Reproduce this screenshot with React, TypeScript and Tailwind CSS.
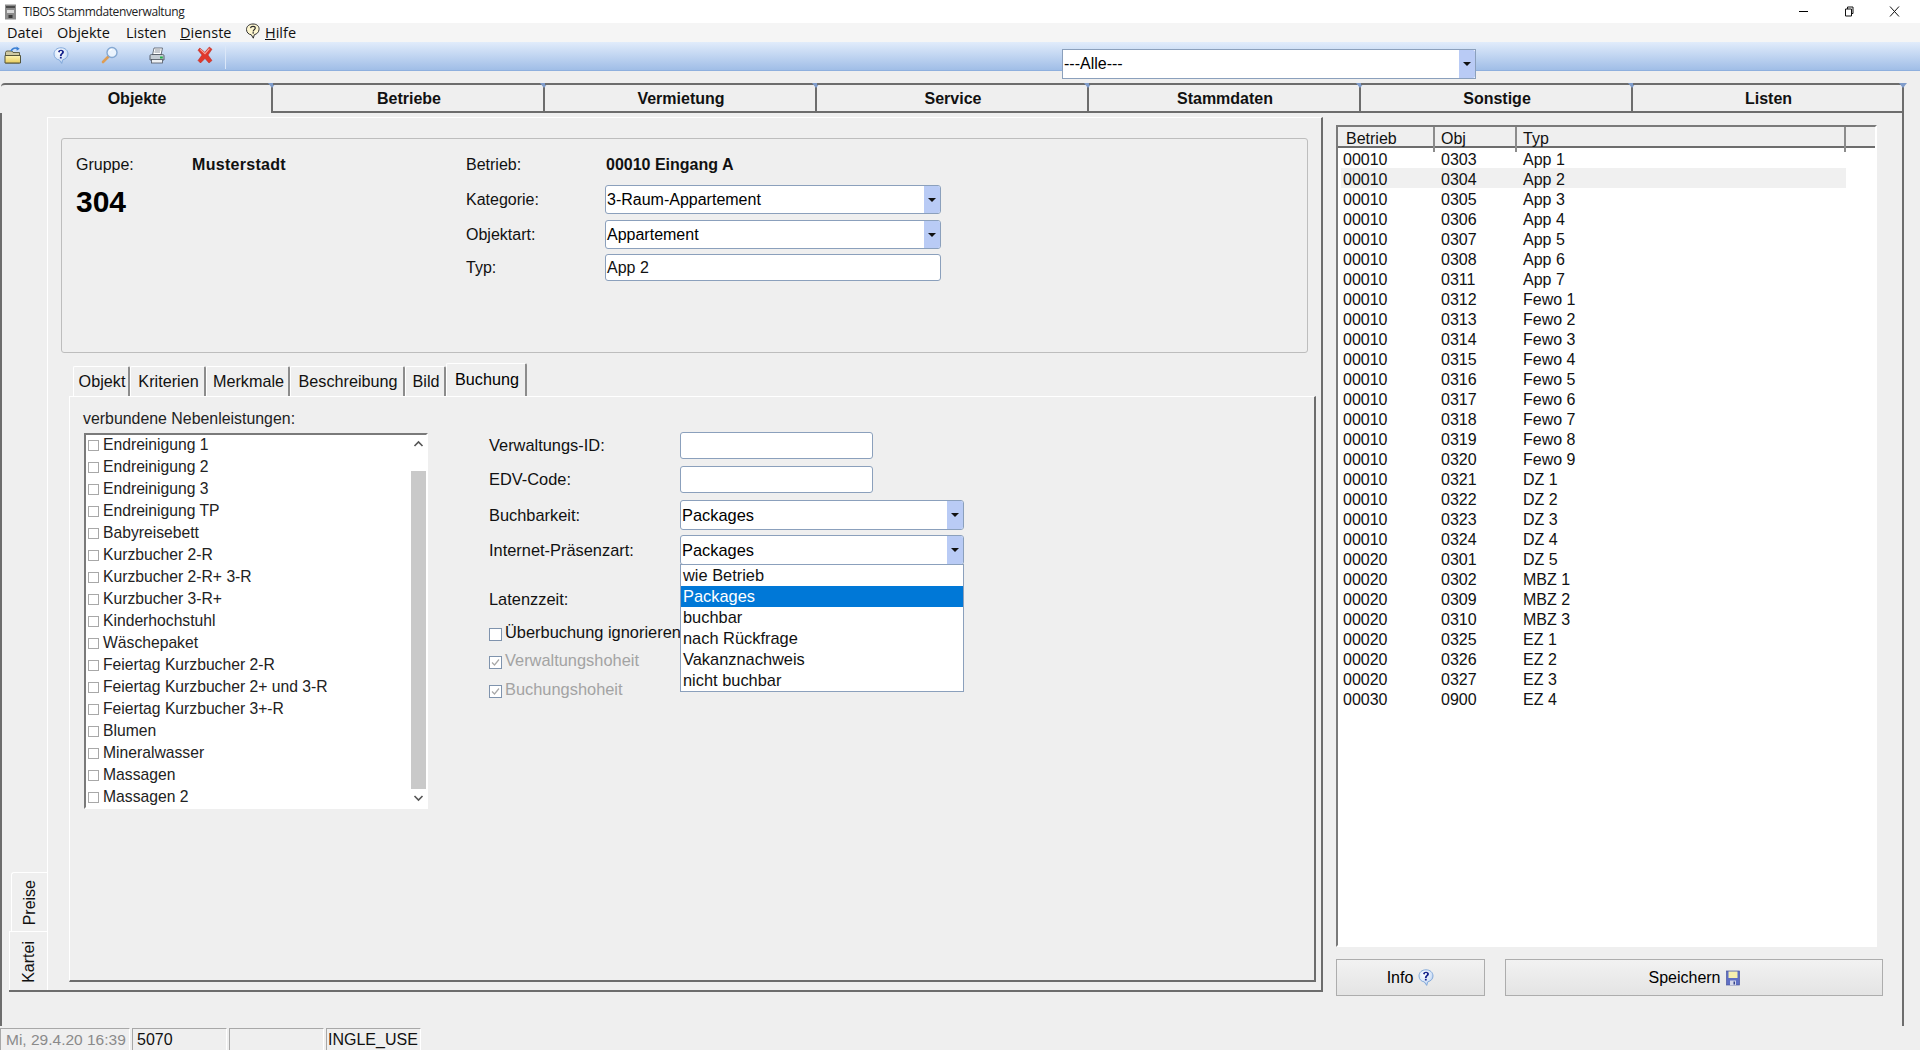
import type { ReactNode } from "react";

const mainTabs = ["Objekte", "Betriebe", "Vermietung", "Service", "Stammdaten", "Sonstige", "Listen"];
const subTabs = [
  { label: "Objekt", w: "w-[57px]" },
  { label: "Kriterien", w: "w-[76px]" },
  { label: "Merkmale", w: "w-[84px]" },
  { label: "Beschreibung", w: "w-[115px]" },
  { label: "Bild", w: "w-[41px]" },
];
const extras = [
  "Endreinigung 1",
  "Endreinigung 2",
  "Endreinigung 3",
  "Endreinigung TP",
  "Babyreisebett",
  "Kurzbucher 2-R",
  "Kurzbucher 2-R+ 3-R",
  "Kurzbucher 3-R+",
  "Kinderhochstuhl",
  "Wäschepaket",
  "Feiertag Kurzbucher 2-R",
  "Feiertag Kurzbucher 2+ und 3-R",
  "Feiertag Kurzbucher 3+-R",
  "Blumen",
  "Mineralwasser",
  "Massagen",
  "Massagen 2",
];
const objects = [
  ["00010", "0303", "App 1"],
  ["00010", "0304", "App 2"],
  ["00010", "0305", "App 3"],
  ["00010", "0306", "App 4"],
  ["00010", "0307", "App 5"],
  ["00010", "0308", "App 6"],
  ["00010", "0311", "App 7"],
  ["00010", "0312", "Fewo 1"],
  ["00010", "0313", "Fewo 2"],
  ["00010", "0314", "Fewo 3"],
  ["00010", "0315", "Fewo 4"],
  ["00010", "0316", "Fewo 5"],
  ["00010", "0317", "Fewo 6"],
  ["00010", "0318", "Fewo 7"],
  ["00010", "0319", "Fewo 8"],
  ["00010", "0320", "Fewo 9"],
  ["00010", "0321", "DZ 1"],
  ["00010", "0322", "DZ 2"],
  ["00010", "0323", "DZ 3"],
  ["00010", "0324", "DZ 4"],
  ["00020", "0301", "DZ 5"],
  ["00020", "0302", "MBZ 1"],
  ["00020", "0309", "MBZ 2"],
  ["00020", "0310", "MBZ 3"],
  ["00020", "0325", "EZ 1"],
  ["00020", "0326", "EZ 2"],
  ["00020", "0327", "EZ 3"],
  ["00030", "0900", "EZ 4"],
];
const dropdownItems = ["wie Betrieb", "Packages", "buchbar", "nach Rückfrage", "Vakanznachweis", "nicht buchbar"];

function HelpBubble({ id }: { id: string }) {
  return (
    <svg width="16" height="17" viewBox="0 0 16 17" className="shrink-0">
      <defs>
        <radialGradient id={id} cx="0.4" cy="0.3" r="0.8">
          <stop offset="0" stopColor="#ffffff" />
          <stop offset="0.6" stopColor="#d5e4f8" />
          <stop offset="1" stopColor="#8fb4e6" />
        </radialGradient>
      </defs>
      <path d="M8 0.800C3.900 0.800 1 3.400 1 7c0 3.300 2.400 5.600 5.300 5.900L8.700 16.400 9.900 12.700C12.800 12.100 15 10 15 7 15 3.400 12.100 0.800 8 0.800z" fill={`url(#${id})`} stroke="#7da5d8" strokeWidth="0.900" />
      <path d="M5 5.100C5.300 3.400 6.500 2.700 8 2.700c1.800 0 3 1 3 2.400 0 2.200-2.300 2-2.300 4H6.900C6.900 6.600 9 6.500 9 5.100 9 4.500 8.600 4.100 8 4.100c-.7 0-1.100.5-1.200 1.300z" fill="#16248c" />
      <rect x="6.900" y="9.800" width="1.800" height="1.700" fill="#16248c" />
    </svg>
  );
}

function FolderIcon() {
  return (
    <svg width="18" height="18" viewBox="0 0 18 18" className="shrink-0">
      <defs>
        <linearGradient id="folderFill" x1="0" y1="0" x2="0" y2="1">
          <stop offset="0" stopColor="#fdf4b4" />
          <stop offset="1" stopColor="#e8cc5c" />
        </linearGradient>
      </defs>
      <path d="M1.500 6.500L2.500 5H8l1 1.500h6.500V17H1.500z" fill="#cfc9a2" stroke="#55553a" strokeWidth="0.900" />
      <path d="M1 9.500h15.500V17H1z" fill="url(#folderFill)" stroke="#55553a" strokeWidth="1" />
      <path d="M7 5.200C8 2.500 10.500 1.500 13 2.500" fill="none" stroke="#3a7fd4" strokeWidth="1.500" />
      <path d="M12.500 0.500l3.200 2.300-3 1.900z" fill="#3a7fd4" />
    </svg>
  );
}

function MagnifierIcon() {
  return (
    <svg width="18" height="18" viewBox="0 0 18 18" className="shrink-0">
      <path d="M7.500 10.500L2 16" stroke="#dd9d55" strokeWidth="2.600" strokeLinecap="round" />
      <circle cx="11" cy="6.500" r="5" fill="#eaf3fd" stroke="#85a8d2" strokeWidth="1.400" />
      <path d="M8.500 5C9 3.900 10 3.300 11 3.300" fill="none" stroke="#ffffff" strokeWidth="1.200" />
    </svg>
  );
}

function PrinterIcon() {
  return (
    <svg width="16" height="17" viewBox="0 0 16 17" className="shrink-0">
      <path d="M5 1h8.500l-1.500 7H3.500z" fill="#ffffff" stroke="#5e6570" strokeWidth="0.900" />
      <path d="M6 3h5.500M5.500 5h5.500" stroke="#7d8590" strokeWidth="0.900" />
      <path d="M1 9c0-1 .5-1.500 1.500-1.500h11c1 0 1.500.5 1.500 1.500v4H1z" fill="#c4ccd4" stroke="#4f5661" strokeWidth="0.900" />
      <rect x="2.500" y="12.500" width="11" height="3.500" fill="#eef1f4" stroke="#4f5661" strokeWidth="0.800" />
      <rect x="11" y="9.500" width="2.800" height="2" fill="#23b04a" />
    </svg>
  );
}

function RedCrossIcon() {
  return (
    <svg width="16" height="18" viewBox="0 0 16 18" className="shrink-0">
      <path d="M2.800 2l5 4.300L12.300 1l2.700 2.300-4 5.700 4 5.500-3 2.500-4-4.500L3.500 17 1 14.500 5 9 1 4.200z" fill="#e0382c" stroke="#b5271d" strokeWidth="0.500" />
      <path d="M3.200 3.300L8 7.600 12.400 2.600" fill="none" stroke="#f6a399" strokeWidth="1.100" />
    </svg>
  );
}

function AppIcon() {
  return (
    <svg width="13" height="16" viewBox="0 0 13 16" className="shrink-0">
      <rect x="1" y="0.500" width="11" height="15" fill="#8b8b8b" />
      <rect x="2" y="2" width="9" height="2" fill="#4a4a4a" />
      <rect x="3" y="6" width="7" height="3" fill="#d9d9d9" />
      <rect x="4.500" y="11" width="4" height="3" fill="#3a3a3a" />
    </svg>
  );
}

function FloppyIcon() {
  return (
    <svg width="14" height="16" viewBox="0 0 14 16" className="shrink-0">
      <rect x="0.500" y="1" width="13" height="14" fill="#5f6fc4" stroke="#4a579f" strokeWidth="0.700" />
      <rect x="2.500" y="1.500" width="9" height="6.500" fill="#f6efb0" />
      <rect x="4" y="10.500" width="6" height="4.500" fill="#d5d8ea" />
      <rect x="7.500" y="11.500" width="1.500" height="3" fill="#39458c" />
    </svg>
  );
}

function Combo({ value, className }: { value: string; className: string }) {
  return (
    <div className={`flex items-center justify-between rounded-[3px] border border-[#8ba0bc] bg-white text-black ${className}`}>
      <span className="pl-[1px]">{value}</span>
      <span className="flex h-full w-[16px] items-center justify-center rounded-r-[2px] bg-[#b9cbf5]">
        <span className="h-0 w-0 border-x-[4px] border-t-[4px] border-x-transparent border-t-[#111]" />
      </span>
    </div>
  );
}

function TextBox({ value, className }: { value?: string; className: string }) {
  return (
    <div className={`flex items-center rounded-[3px] border border-[#8ba0bc] bg-white pl-[1px] ${className}`}>
      {value}
    </div>
  );
}

function Field({ label, className, children }: { label: string; className: string; children: ReactNode }) {
  return (
    <div className={`flex items-center ${className}`}>
      <span className="w-[191px] shrink-0">{label}</span>
      {children}
    </div>
  );
}

function FlagRow({ label, disabled, className }: { label: string; disabled?: boolean; className: string }) {
  return (
    <div className={`flex items-center gap-[3px] ${disabled ? "text-[#a3a3a3]" : ""} ${className}`}>
      <span className="flex h-[13px] w-[13px] shrink-0 items-center justify-center border border-[#7f93ad] bg-white">
        {disabled && (
          <svg width="9" height="9" viewBox="0 0 9 9">
            <path d="M1 4.500L3.500 7 8 1.500" fill="none" stroke="#a8a8a8" strokeWidth="1.200" />
          </svg>
        )}
      </span>
      <span className="whitespace-nowrap pb-[3px]">{label}</span>
    </div>
  );
}

function ActionButton({ label, className, children }: { label: string; className: string; children: ReactNode }) {
  return (
    <button className={`flex h-[37px] shrink-0 items-center justify-center gap-[5px] border border-[#adadad] bg-gradient-to-b from-[#f2f2f2] to-[#e4e4e4] text-[16px] text-black ${className}`}>
      {label}
      {children}
    </button>
  );
}

function StatusCell({ className, children }: { className: string; children?: ReactNode }) {
  return (
    <div className={`flex h-[22px] items-center whitespace-nowrap border-t-[1px] border-l-[1px] border-r-[1px] border-t-[#a8a8a8] border-l-[#a8a8a8] border-r-white ${className}`}>
      {children}
    </div>
  );
}

export default function App() {
  return (
    <div className="flex h-[1050px] w-[1920px] flex-col overflow-hidden bg-[#efefef] font-['Liberation_Sans',Arial,sans-serif] text-[16px] text-[#111]">
      {/* title bar */}
      <div className="flex h-[23px] shrink-0 items-center bg-white pl-[4px]">
        <AppIcon />
        <span className="ml-[6px] font-['Open_Sans',sans-serif] text-[12px] tracking-[-0.37px] text-[#222]">TIBOS Stammdatenverwaltung</span>
        <div className="ml-auto flex items-center pr-[20px]">
          <span className="h-[1px] w-[9px] bg-black" />
          <svg width="11" height="11" viewBox="0 0 11 11" className="ml-[35px]">
            <path d="M2.500 3h6v7h-6zM4.500 3V1h5.500v6.500H8.500" fill="none" stroke="#111" strokeWidth="1" />
          </svg>
          <svg width="11" height="11" viewBox="0 0 11 11" className="ml-[35px]">
            <path d="M1 0.500L10 10.500M10 0.500L1 10.500" stroke="#111" strokeWidth="1" />
          </svg>
        </div>
      </div>

      {/* menu */}
      <div className="flex h-[19px] shrink-0 items-center bg-[#f5f5f5] pl-[7px] font-['Open_Sans',sans-serif] text-[14.5px] text-[#111]">
        <span className="w-[50px]">Datei</span>
        <span className="w-[69px]">Objekte</span>
        <span className="w-[54px]">Listen</span>
        <span className="w-[65px]">
          <span className="underline">D</span>ienste
        </span>
        <svg width="16" height="17" viewBox="0 0 16 17" className="mb-[3px] mr-[4px] shrink-0">
          <path d="M8 1C4.200 1 1.500 3.300 1.500 6.500c0 2.900 2.200 5 4.800 5.300l2 3.400 1-3.500c2.600-.6 4.700-2.700 4.700-5.200C14.500 3.300 11.800 1 8 1z" fill="#fdf6cf" stroke="#2e2e2e" strokeWidth="1" />
          <path d="M5.500 5.200C5.700 3.900 6.700 3.300 8 3.300c1.300 0 2.300.7 2.300 1.800 0 1.700-2.100 1.600-2.100 3.300" fill="none" stroke="#2e2e2e" strokeWidth="1.200" />
          <rect x="7.500" y="9.200" width="1.400" height="1.400" fill="#2e2e2e" />
        </svg>
        <span>
          <span className="underline">H</span>ilfe
        </span>
      </div>

      {/* toolbar */}
      <div className="flex h-[29px] shrink-0 items-start bg-gradient-to-b from-[#e1ecfb] to-[#9ebce6] pl-[4px] shadow-[inset_0_-1px_0_#8fb0de]">
        <div className="mt-[4px] flex w-[221px] items-center">
          <span className="w-[49px]"><FolderIcon /></span>
          <span className="w-[48px]"><HelpBubble id="helpToolbar" /></span>
          <span className="w-[48px]"><MagnifierIcon /></span>
          <span className="w-[48px]"><PrinterIcon /></span>
          <span className="w-[28px]"><RedCrossIcon /></span>
        </div>
        <span className="mt-[2px] h-[25px] w-[1px] bg-[#dbe7f8]" />
        <Combo value="---Alle---" className="relative z-10 ml-[836px] mt-[7px] h-[30px] w-[414px] shrink-0 rounded-none" />
      </div>

      {/* main tabs */}
      <div className="ml-[1px] mt-[12px] flex h-[30px] w-[1903px] shrink-0">
        {mainTabs.map((tab, i) => (
          <div
            key={tab}
            className={`relative flex h-full items-center justify-center border-r-2 border-t-2 border-r-[#6d6d6d] border-t-[#6d6d6d] pl-[2px] text-[16px] font-bold ${i === 6 ? "w-[271px]" : "w-[272px]"} ${i === 0 ? "rounded-tl-[4px] pb-[1px]" : "border-b-2 border-b-[#6d6d6d] pt-[1px]"}`}
          >
            {tab}
            <span className="absolute -right-[5px] -top-[2px] h-0 w-0 border-x-[4px] border-t-[5px] border-x-transparent border-t-[#7f9ccb]" />
          </div>
        ))}
      </div>

      {/* page */}
      <div className="flex h-[913px] w-[1904px] shrink-0 border-x-2 border-[#6d6d6d] pt-[4px]">
        <div className="ml-[7px] flex h-[875px] w-[1314px] shrink-0 border-b-2 border-[#6d6d6d]">
          {/* side tabs */}
          <div className="flex w-[38px] shrink-0 flex-col items-end justify-end">
            <div className="flex h-[59px] w-[36px] items-center justify-center rounded-tl-[3px] border-l border-t border-white bg-[#efefef] pt-[2px]">
              <span className="rotate-180 [writing-mode:vertical-rl]">Preise</span>
            </div>
            <div className="flex h-[59px] w-[38px] items-center justify-center border-l border-t border-white bg-[#efefef] pt-[2px]">
              <span className="rotate-180 [writing-mode:vertical-rl]">Kartei</span>
            </div>
          </div>

          {/* object panel */}
          <div className="h-full flex-1 border-l border-r-2 border-t border-l-white border-r-[#6d6d6d] border-t-white">
            <div className="ml-[13px] mt-[20px] flex h-[215px] w-[1247px] rounded-[3px] border border-[#bdbdbd]">
              <div className="w-[404px] shrink-0 pl-[14px] pt-[14px]">
                <div className="flex h-[24px] items-center">
                  <span className="w-[116px]">Gruppe:</span>
                  <span className="font-bold tracking-[0.3px]">Musterstadt</span>
                </div>
                <div className="mt-[7px] text-[30px] font-bold leading-[36px] text-black">304</div>
              </div>
              <div className="pt-[14px]">
                <div className="flex h-[24px] items-center">
                  <span className="w-[140px]">Betrieb:</span>
                  <span className="font-bold">00010 Eingang A</span>
                </div>
                <div className="mt-[8px] flex h-[29px] items-center">
                  <span className="w-[139px]">Kategorie:</span>
                  <Combo value="3-Raum-Appartement" className="h-full w-[336px]" />
                </div>
                <div className="mt-[6px] flex h-[29px] items-center">
                  <span className="w-[139px]">Objektart:</span>
                  <Combo value="Appartement" className="h-full w-[336px]" />
                </div>
                <div className="mt-[5px] flex h-[27px] items-center">
                  <span className="w-[139px]">Typ:</span>
                  <TextBox value="App 2" className="h-full w-[336px]" />
                </div>
              </div>
            </div>

            {/* sub tabs */}
            <div className="ml-[25px] mt-[10px] flex h-[33px] items-end text-[16.2px]">
              {subTabs.map((tab) => (
                <div key={tab.label} className={`flex h-[30px] items-center justify-center rounded-t-[2px] border-l border-r-2 border-t border-l-white border-r-[#8c8c8c] border-t-white pl-[2px] ${tab.w}`}>
                  {tab.label}
                </div>
              ))}
              <div className="flex h-[33px] w-[81px] items-center justify-center rounded-t-[2px] border-l border-r-2 border-t border-l-white border-r-[#8c8c8c] border-t-white pb-[2px] pl-[2px] text-black">
                Buchung
              </div>
            </div>

            {/* booking panel */}
            <div className="ml-[21px] flex h-[586px] w-[1247px] border-b-2 border-l border-r-2 border-t border-b-[#6d6d6d] border-l-white border-r-[#6d6d6d] border-t-white text-[16.4px]">
              <div className="ml-[13px] w-[345px] shrink-0 pt-[13px]">
                <div className="h-[23px] text-[15.9px] leading-[18px] text-[#222]">verbundene Nebenleistungen:</div>
                <div className="ml-[1px] flex h-[376px] border-2 border-b-white border-l-[#7a7a7a] border-r-white border-t-[#7a7a7a] bg-white">
                  <div className="flex-1">
                    {extras.map((item) => (
                      <div key={item} className="flex h-[22px] items-center gap-[4px] pl-[2px] text-[15.7px] text-[#222]">
                        <span className="mb-[2px] h-[11px] w-[11px] shrink-0 border border-[#a8a8a8] bg-white" />
                        <span className="whitespace-nowrap pb-[3px]">{item}</span>
                      </div>
                    ))}
                  </div>
                  <div className="flex w-[15px] shrink-0 flex-col items-center">
                    <svg width="15" height="36" viewBox="0 0 15 36" className="shrink-0">
                      <path d="M3.500 11L7.500 7l4 4" fill="none" stroke="#555" strokeWidth="1.600" />
                    </svg>
                    <div className="w-full flex-1 bg-[#c9c9c9]" />
                    <svg width="15" height="18" viewBox="0 0 15 18" className="shrink-0">
                      <path d="M3.500 7l4 4 4-4" fill="none" stroke="#555" strokeWidth="1.600" />
                    </svg>
                  </div>
                </div>
              </div>

              {/* booking fields */}
              <div className="ml-[61px] pt-[35px]">
                <Field label="Verwaltungs-ID:" className="h-[27px]">
                  <TextBox className="h-full w-[193px]" />
                </Field>
                <Field label="EDV-Code:" className="mt-[7px] h-[27px]">
                  <TextBox className="h-full w-[193px]" />
                </Field>
                <Field label="Buchbarkeit:" className="mt-[7px] h-[30px]">
                  <Combo value="Packages" className="h-full w-[284px]" />
                </Field>
                <Field label="Internet-Präsenzart:" className="mt-[5px] h-[30px]">
                  <div className="relative h-full w-[284px]">
                    <Combo value="Packages" className="h-full w-full" />
                    <div className="absolute left-0 top-[29px] z-10 w-full border border-[#8ba0bc] bg-white">
                      {dropdownItems.map((item) => (
                        <div key={item} className={`flex h-[21px] items-center pl-[2px] ${item === "Packages" ? "bg-[#0078d7] text-white" : ""}`}>
                          {item}
                        </div>
                      ))}
                    </div>
                  </div>
                </Field>
                <div className="mt-[22px] h-[24px] leading-[24px]">Latenzzeit:</div>
                <FlagRow label="Überbuchung ignorieren" className="mt-[10px] h-[26px]" />
                <FlagRow label="Verwaltungshoheit" disabled className="mt-[2px] h-[26px]" />
                <FlagRow label="Buchungshoheit" disabled className="mt-[3px] h-[26px]" />
              </div>
            </div>
          </div>
        </div>

        {/* object list */}
        <div className="ml-[13px] w-[548px] shrink-0 pt-[8px]">
          <div className="h-[822px] w-[541px] border-2 border-b-white border-l-[#7a7a7a] border-r-white border-t-[#7a7a7a] bg-white">
            <div className="grid h-[21px] grid-cols-[97px_82px_329px_1fr] border-b-2 border-b-[#6d6d6d] bg-[#efefef]">
              <div className="flex items-center border-r-2 border-r-[#8c8c8c] pb-[1px] pl-[8px]">Betrieb</div>
              <div className="flex items-center border-r-2 border-r-[#8c8c8c] pb-[1px] pl-[6px]">Obj</div>
              <div className="flex items-center border-r-2 border-r-[#8c8c8c] pb-[1px] pl-[6px]">Typ</div>
              <div />
            </div>
            <div>
              {objects.map(([group, obj, type]) => (
                <div key={obj} className={`ml-[3px] grid h-[20px] w-[505px] grid-cols-[100px_82px_1fr] items-center ${obj === "0304" ? "bg-[#f0f0f0]" : ""}`}>
                  <span className="pl-[2px]">{group}</span>
                  <span>{obj}</span>
                  <span>{type}</span>
                </div>
              ))}
            </div>
          </div>
          <div className="mt-[12px] flex gap-[20px]">
            <ActionButton label="Info" className="w-[149px]">
              <HelpBubble id="helpInfo" />
            </ActionButton>
            <ActionButton label="Speichern" className="w-[378px]">
              <FloppyIcon />
            </ActionButton>
          </div>
        </div>
      </div>

      {/* status bar */}
      <div className="mt-[2px] flex h-[22px] shrink-0 gap-[2px]">
        <StatusCell className="w-[130px] pl-[5px] text-[15.5px] text-[#8a8a8a]">Mi, 29.4.20 16:39</StatusCell>
        <StatusCell className="w-[95px] pl-[4px]">5070</StatusCell>
        <StatusCell className="w-[95px]" />
        <StatusCell className="w-[95px] overflow-hidden pl-[1px]">INGLE_USE</StatusCell>
      </div>
    </div>
  );
}
